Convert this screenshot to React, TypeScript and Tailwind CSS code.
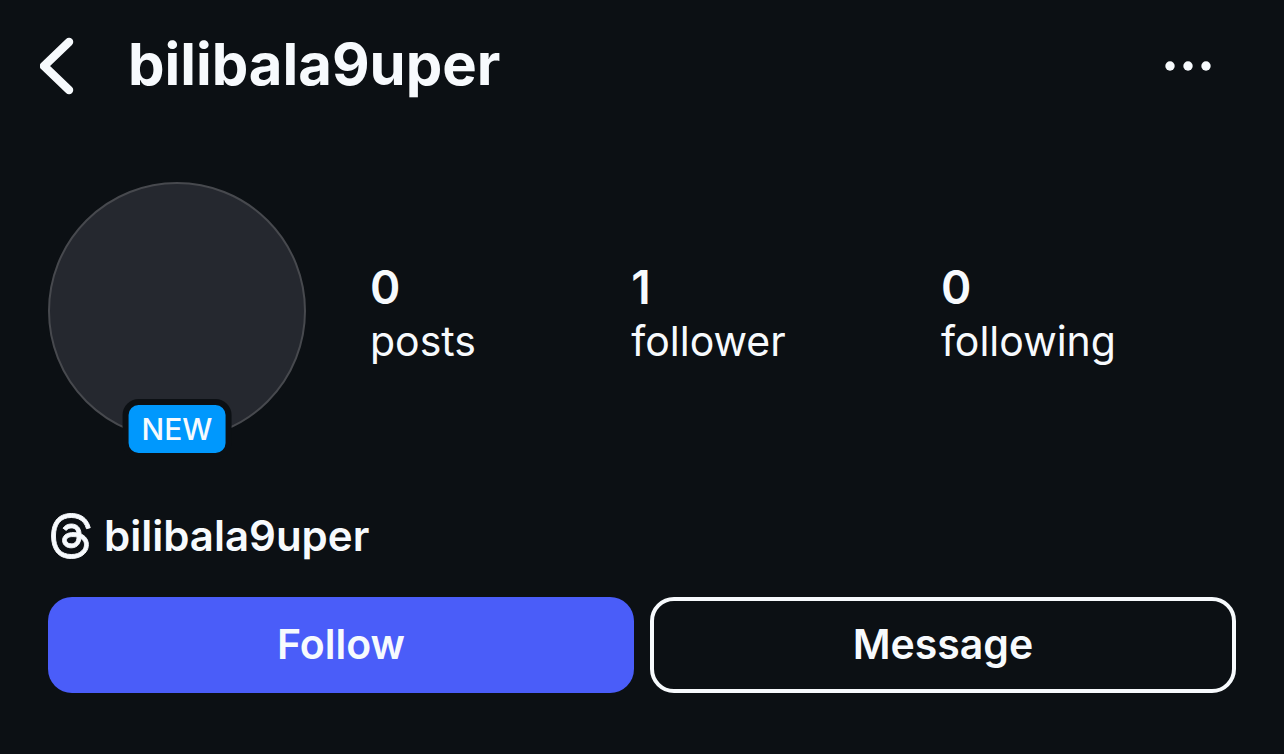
import { FaThreads } from 'react-icons/fa6';

const stats = [
  { value: '0', label: 'posts' },
  { value: '1', label: 'follower' },
  { value: '0', label: 'following' },
];

export default function App() {
  return (
    <main className="min-h-screen bg-[#0c1014] px-12 text-[#f7fafd] font-['Inter',sans-serif]">
      <header className="flex h-33 items-center justify-between">
        <div className="flex items-center gap-12">
          <button type="button" aria-label="Back">
            <svg className="-ml-2 h-16 w-10" viewBox="0 0 40 64" fill="none">
              <path d="M29 8 4 32l25 24" stroke="currentColor" strokeWidth="8.5" strokeLinecap="round" strokeLinejoin="round" />
            </svg>
          </button>
          <h1 className="text-[58px] font-bold leading-15 pb-1">bilibala9uper</h1>
        </div>
        <button type="button" aria-label="More options" className="mr-6">
          <svg className="h-3 w-12" viewBox="0 0 48 12" fill="currentColor">
            <circle cx="6" cy="6" r="4.7" />
            <circle cx="24" cy="6" r="4.7" />
            <circle cx="42" cy="6" r="4.7" />
          </svg>
        </button>
      </header>

      <section className="mt-[50px] flex items-center">
        <div className="relative size-[258px] rounded-full border-2 border-[#47494e] bg-[#25282f]">
          <span className="absolute -bottom-[21px] left-1/2 -translate-x-1/2 rounded-2xl border-6 border-[#0c1014] bg-[#0098fd] px-[13px] text-[30px] font-medium leading-12">
            NEW
          </span>
        </div>
        <dl className="mr-30 ml-16 flex flex-1 justify-between pt-1">
          {stats.map((stat) => (
            <div key={stat.label} className="flex flex-col-reverse">
              <dt className="text-[41px] leading-13">{stat.label}</dt>
              <dd className="text-[46px] font-semibold leading-14">{stat.value}</dd>
            </div>
          ))}
        </dl>
      </section>

      <a href="#threads" className="mt-17 flex items-center gap-3 text-[42px] font-semibold leading-14">
        <FaThreads className="ml-0.5 h-12 w-[42px] overflow-visible" stroke="currentColor" strokeWidth="10" />
        bilibala9uper
      </a>

      <div className="mt-[33px] grid grid-cols-2 gap-4 text-[41px] font-semibold">
        <button type="button" className="h-24 rounded-3xl bg-[#4a5df9]">Follow</button>
        <button type="button" className="h-24 rounded-3xl border-4 border-[#f7fafd]">Message</button>
      </div>
    </main>
  );
}
